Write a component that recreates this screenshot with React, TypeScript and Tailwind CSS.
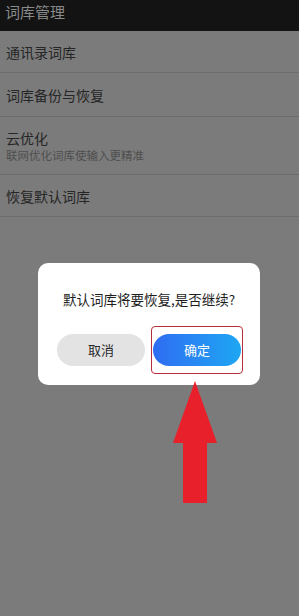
import React from 'react';

const rows = [
  { title: '通讯录词库', h: 'h-[42px]' },
  { title: '词库备份与恢复', h: 'h-[44px]' },
  { title: '云优化', sub: '联网优化词库使输入更精准', h: 'h-[58px]' },
  { title: '恢复默认词库', h: 'h-[42px]' },
];

const App: React.FC = () => {
  return (
    <div
      className="relative w-[299px] h-[616px] overflow-hidden bg-[#7b7b7b]"
      style={{ fontFamily: '"Noto Sans CJK SC", "Noto Sans", sans-serif' }}
    >
      {/* header */}
      <div className="h-[31px] bg-[#131313] flex items-start px-[5px] pt-[2px]">
        <span className="text-[15px] leading-[20px] text-[#8a8a8a]">词库管理</span>
      </div>

      {/* list */}
      <div className="flex flex-col">
        {rows.map((r) => (
          <div
            key={r.title}
            className={`${r.h} flex flex-col justify-center px-[6px] border-b border-[#6c6c6c]`}
          >
            <span className="text-[14px] leading-[18px] text-[#262626]">{r.title}</span>
            {r.sub && (
              <span className="text-[11.5px] leading-[14px] text-[#4e4e4e] mt-[1px]">{r.sub}</span>
            )}
          </div>
        ))}
      </div>

      {/* dialog */}
      <div className="absolute left-[38px] top-[263px] w-[222px] h-[122px] rounded-[10px] bg-white flex flex-col items-center">
        <div className="mt-[27px] text-[13.5px] leading-[18px] text-[#1e1e1e]">
          默认词库将要恢复,是否继续?
        </div>
        <div className="mt-[26px] flex gap-[8px]">
          <button className="w-[88px] h-[32px] rounded-full bg-[#e3e3e3] text-[13px] text-[#2a2a2a]">
            取消
          </button>
          <div className="relative">
            <button className="w-[88px] h-[32px] rounded-full bg-gradient-to-r from-[#2f6cf2] to-[#1ea6f3] text-[13px] text-white">
              确定
            </button>
            <div className="absolute -left-[2px] -top-[8px] w-[92px] h-[48px] rounded-[4px] border-[1.5px] border-[#b72e38]" />
          </div>
        </div>
      </div>

      {/* arrow */}
      <svg className="absolute left-[172px] top-[381px]" width="46" height="123" viewBox="0 0 46 123">
        <polygon points="23,0 45,62 35,62 35,122 11,122 11,62 1,62" fill="#e8202b" />
      </svg>
    </div>
  );
};

export default App;
